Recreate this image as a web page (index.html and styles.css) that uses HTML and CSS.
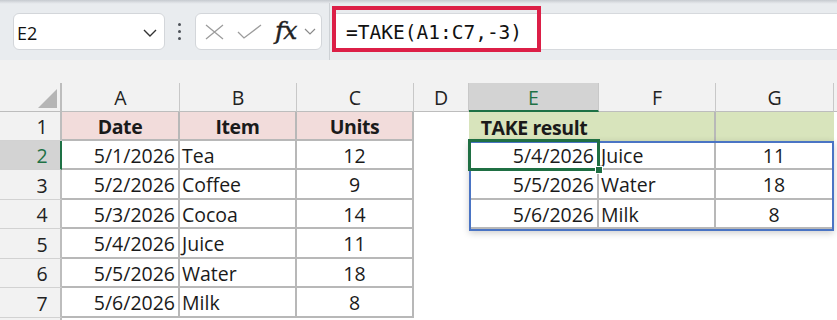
FILE: index.html
```html
<!DOCTYPE html>
<html lang="en">
<head>
    <meta charset="UTF-8">
    <title>TAKE example</title>
    <link rel="stylesheet" href="styles.css">
</head>
<body>
    <!-- formula bar -->
    <div class="toolbar">
        <div class="namebox">
            <span>E2</span>
            <svg width="14" height="8" viewBox="0 0 14 8"><path d="M1 1l6 6 6-6" fill="none" stroke="#333" stroke-width="1.4"/></svg>
        </div>
        <div class="dots"><i></i><i></i><i></i></div>
        <div class="fnbox">
            <svg class="ico-x" width="19" height="16" viewBox="0 0 19 16"><path d="M1 1l17 14M18 1L1 15" fill="none" stroke="#9c9c9c" stroke-width="1.3"/></svg>
            <svg class="ico-ok" width="25" height="15" viewBox="0 0 25 15"><path d="M1 8l6 6L24 1" fill="none" stroke="#9c9c9c" stroke-width="1.3"/></svg>
            <span class="fx">fx</span>
            <svg class="ico-dd" width="12" height="7" viewBox="0 0 12 7"><path d="M1 1l5 5 5-5" fill="none" stroke="#8a8a8a" stroke-width="1.2"/></svg>
        </div>
        <div class="sep"></div>
        <div class="formula">
            <span class="hl">=TAKE(A1:C7,-3)</span>
        </div>
    </div>

    <div class="band"></div>

    <div class="wrap">
        <!-- sheet cells -->
        <div class="sheet">
            <div class="c corner"><svg width="19" height="19" viewBox="0 0 19 19"><path d="M19 0V19H0Z" fill="#b5b5b5"/></svg></div>
            <div class="c hd">A</div>
            <div class="c hd">B</div>
            <div class="c hd">C</div>
            <div class="c hd">D</div>
            <div class="c hd on">E</div>
            <div class="c hd">F</div>
            <div class="c hd">G</div>
            <div class="c hd last"></div>

            <div class="c rh">1</div>
            <div class="c g pk b m">Date</div>
            <div class="c g pk b m">Item</div>
            <div class="c g pk b m">Units</div>
            <div class="c"></div>
            <div class="c gr b m">TAKE result</div>
            <div class="c gr line"></div>
            <div class="c gr"></div>
            <div class="c"></div>

            <div class="c rh on">2</div>
            <div class="c g r">5/1/2026</div>
            <div class="c g l">Tea</div>
            <div class="c g m">12</div>
            <div class="c"></div>
            <div class="c g r">5/4/2026</div>
            <div class="c g l">Juice</div>
            <div class="c g m">11</div>
            <div class="c"></div>

            <div class="c rh">3</div>
            <div class="c g r">5/2/2026</div>
            <div class="c g l">Coffee</div>
            <div class="c g m">9</div>
            <div class="c"></div>
            <div class="c g r">5/5/2026</div>
            <div class="c g l">Water</div>
            <div class="c g m">18</div>
            <div class="c"></div>

            <div class="c rh">4</div>
            <div class="c g r">5/3/2026</div>
            <div class="c g l">Cocoa</div>
            <div class="c g m">14</div>
            <div class="c"></div>
            <div class="c g r">5/6/2026</div>
            <div class="c g l">Milk</div>
            <div class="c g m">8</div>
            <div class="c"></div>

            <div class="c rh">5</div>
            <div class="c g r">5/4/2026</div>
            <div class="c g l">Juice</div>
            <div class="c g m">11</div>
            <div class="c"></div><div class="c"></div><div class="c"></div><div class="c"></div><div class="c"></div>

            <div class="c rh">6</div>
            <div class="c g r">5/5/2026</div>
            <div class="c g l">Water</div>
            <div class="c g m">18</div>
            <div class="c"></div><div class="c"></div><div class="c"></div><div class="c"></div><div class="c"></div>

            <div class="c rh">7</div>
            <div class="c g r">5/6/2026</div>
            <div class="c g l">Milk</div>
            <div class="c g m">8</div>
            <div class="c"></div><div class="c"></div><div class="c"></div><div class="c"></div><div class="c"></div>

            <div class="c rh"></div>
        </div>

        <!-- spill range + active cell, same grid laid over the cells -->
        <div class="sheet over">
            <div class="spill"></div>
            <div class="sel"></div>
        </div>
    </div>
</body>
</html>
```

FILE: styles.css
```css
body {
    margin: 0;
    width: 837px;
    height: 320px;
    overflow: hidden;
    background: #fff;
    color: #1a1a1a;
    font-family: "Open Sans", "Noto Sans", sans-serif;
}

/* formula bar */
.toolbar {
    display: flex;
    align-items: center;
    height: 60px;
    box-sizing: border-box;
    padding: 3px 0 0 13px;
    background: linear-gradient(to bottom, #c6cacf 0, #e2e5e9 3px, #e9ecef 4px);
}

.namebox {
    width: 152px;
    height: 37px;
    box-sizing: border-box;
    display: flex;
    align-items: center;
    justify-content: space-between;
    padding: 2px 7px 0 3px;
    background: #fff;
    border: 1px solid #d3d6da;
    border-radius: 6px;
    font-size: 18px;
    color: #111;
}

.dots {
    display: flex;
    flex-direction: column;
    gap: 4px;
    margin: 0 14px 0 13px;
}
.dots i {
    width: 3px;
    height: 3px;
    border-radius: 50%;
    background: #4d5258;
}

.fnbox {
    width: 127px;
    height: 37px;
    box-sizing: border-box;
    display: flex;
    align-items: center;
    padding-left: 9px;
    background: #fff;
    border: 1px solid #d3d6da;
    border-radius: 6px;
}
.ico-ok { margin-left: 13px; }
.fx {
    margin-left: 13px;
    font-family: "DejaVu Serif", "Liberation Serif", serif;
    font-style: italic;
    font-size: 25px;
    letter-spacing: -1px;
    color: #222;
    line-height: 1;
    margin-top: -3px;
    -webkit-text-stroke: 0.4px #222;
}
.ico-dd { margin-left: 8px; }

.sep {
    align-self: stretch;
    width: 1px;
    margin-left: 7px;
    background: #cdd1d5;
}

.formula {
    flex: 1;
    height: 37px;
    box-sizing: border-box;
    display: flex;
    align-items: center;
    margin-left: 2px;
    background: #fff;
    border-top: 1px solid #d6d9dd;
    border-bottom: 1px solid #d6d9dd;
}
.hl {
    flex-shrink: 0;
    width: 209px;
    height: 46px;
    margin-top: -5px;
    box-sizing: border-box;
    display: flex;
    align-items: center;
    padding: 6px 0 0 10px;
    border: 4px solid #dc1f47;
    font-family: "DejaVu Sans Mono", "Liberation Mono", monospace;
    font-size: 19.5px;
    color: #111;
}

.band {
    height: 23px;
    background: #f2f2f2;
}

/* grid */
.wrap {
    display: grid;
}
.sheet {
    grid-area: 1 / 1;
    display: grid;
    grid-template-columns: 62px 118px 117px 117px 55px 130px 117px 118px 1fr;
    grid-template-rows: 29px 29px 29px 30px 29px 30px 29px 30px 30px;
}
.over {
    pointer-events: none;
}

.c {
    box-sizing: border-box;
    display: flex;
    align-items: center;
    padding-top: 1px;
    font-size: 19.5px;
    white-space: nowrap;
    overflow: hidden;
}

.corner {
    justify-content: flex-end;
    align-items: flex-end;
    padding: 0 3px 3px 0;
    background: #f2f2f2;
    border-right: 2px solid #bdbdbd;
    border-bottom: 1px solid #bdbdbd;
}

.hd {
    justify-content: center;
    background: #f2f2f2;
    border-right: 1px solid #c8c8c8;
    border-bottom: 1px solid #bdbdbd;
    color: #222;
}
.hd.on {
    background: #d3d3d3;
    color: #1e7145;
    border-bottom: 2px solid #1e7145;
}
.hd.last { border-right: none; }

.rh {
    justify-content: center;
    padding-left: 24px;
    background: #f2f2f2;
    border-right: 2px solid #bdbdbd;
    border-bottom: 1px solid #d2d2d2;
    color: #222;
}
.rh.on {
    background: #d3d3d3;
    color: #1e7145;
    border-right-color: #1e7145;
}

.g {
    border-right: 2px solid #b8b8b8;
    border-bottom: 2px solid #b8b8b8;
}
.pk { background: #f2dcdb; }
.gr { background: #d8e4bc; }
.gr.line { border-right: 2px solid #b8b8b8; }

.b { font-weight: 700; letter-spacing: -0.4px; }
.m { justify-content: center; }
.r { justify-content: flex-end; padding-right: 3px; }
.l { padding-left: 2px; }

.spill {
    grid-column: 6 / 9;
    grid-row: 3 / 6;
    margin-bottom: -2px;
    border: 2px solid #4a74c4;
    box-shadow: 0 2px 7px rgba(0, 0, 0, 0.2);
}

.sel {
    grid-column: 6;
    grid-row: 3;
    position: relative;
    margin: -2px -1px -1px -1px;
    border: 3px solid #1f6f43;
}
.sel::after {
    content: "";
    position: absolute;
    right: -6px;
    bottom: -6px;
    width: 6px;
    height: 6px;
    background: #1f6f43;
    border: 1px solid #fff;
}
```
